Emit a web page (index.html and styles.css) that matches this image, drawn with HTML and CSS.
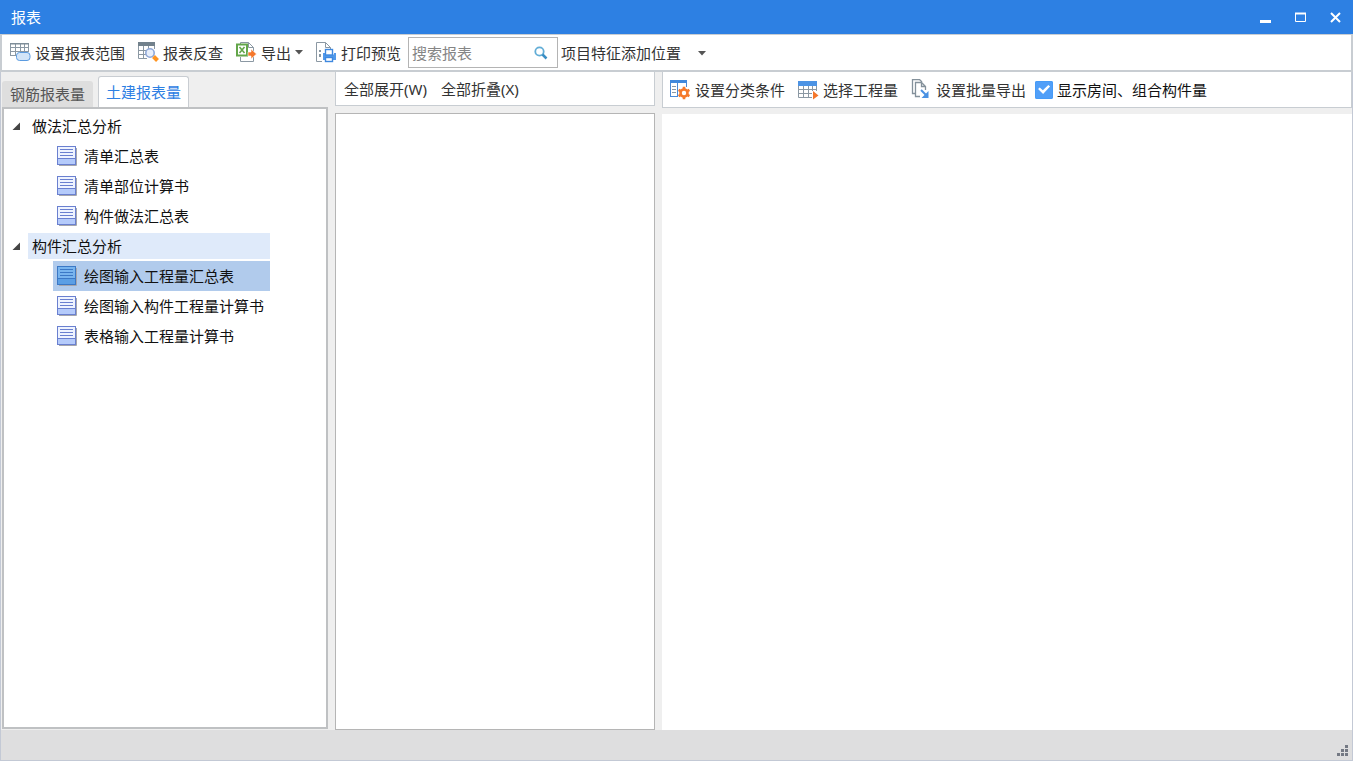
FILE: index.html
```html
<!DOCTYPE html>
<html lang="zh-CN">
<head>
<meta charset="utf-8">
<title>报表</title>
<link rel="stylesheet" href="styles.css">
</head>
<body>
<svg class="defs" aria-hidden="true">
  <symbol id="report" viewBox="0 0 21 21">
    <path d="M2 19.500h17.500V2" fill="none" stroke="#a4a6ad"/>
    <rect x=".5" y=".5" width="18" height="18" fill="var(--paper)" stroke="var(--edge)"/>
    <path d="M1 13h17v5H1z" fill="var(--foot)"/>
    <path d="M1 12.500h17M3 3.500h13M3 6.500h13M3 9.500h13" stroke="var(--edge)" fill="none"/>
  </symbol>
  <symbol id="caret" viewBox="0 0 8 5"><path d="M0 0h8L4 4.500z" fill="#555"/></symbol>
  <symbol id="twisty" viewBox="0 0 9 9"><path d="M8 .5V8H.5z" fill="#444"/></symbol>
</svg>
<div class="window">
  <header class="titlebar">
    <h1 class="title">报表</h1>
    <div class="controls">
      <button class="control" aria-label="最小化"><svg width="11" height="11"><path d="M0 9.500h11" stroke="#fff" stroke-width="3"/></svg></button>
      <button class="control" aria-label="最大化"><svg width="11" height="11"><path d="M.5 1v8.500h10V1" fill="none" stroke="#fff"/><path d="M0 1.500h11" stroke="#fff" stroke-width="2"/></svg></button>
      <button class="control" aria-label="关闭"><svg width="11" height="11"><path d="M1 1l9 9M10 1l-9 9" stroke="#fff" stroke-width="2"/></svg></button>
    </div>
  </header>

  <div class="toolbar main-toolbar">
    <div class="group">
      <button class="tool">
        <svg class="icon" viewBox="0 0 21 21"><path d="M.5 1.500h18M.5 5.500h18M.5 9.500h18M.5 13.500H7M.5 1v13M5.500 1v13M10.500 1v9M14.500 1v9M18.500 1v9" fill="none" stroke="#8b98a3"/><path d="M0 1h19v1.500H0z" fill="#7f8e99"/><rect x="6.500" y="10.500" width="13.500" height="8" rx="3" fill="#d3e5f8" stroke="#5b9be0"/></svg>
        设置报表范围</button>
      <button class="tool">
        <svg class="icon" viewBox="0 0 21 21"><path d="M.5 1v15.500H9M5.500 4v12M10.500 4v4M16.500 1v6M1 8.500h8M1 12.500h7" fill="none" stroke="#8b98a3"/><path d="M0 0h17v4H0z" fill="#72818c"/><circle cx="12" cy="11" r="4.200" fill="#e8effb" stroke="#8fa8d8" stroke-width="1.600"/><path d="M15.500 14.500l4 4" stroke="#ff9420" stroke-width="4"/></svg>
        报表反查</button>
      <button class="tool">
        <svg class="icon" viewBox="0 0 21 21"><path d="M4.500 2V.500h8l5 5v14h-13V15M12.500.5v5h5" fill="#fff" stroke="#8b98a3"/><rect x="1" y="2.500" width="10" height="11" fill="#fff" stroke="#63a64a" stroke-width="2"/><path d="M3.500 5l5 6M8.500 5l-5 6" stroke="#63a64a" stroke-width="1.600"/><path d="M12 10h3V7l5.500 5-5.500 5v-3h-3z" fill="#f5772b" stroke="#fff" stroke-width=".6"/></svg>
        导出
        <svg class="caret export-caret"><use href="#caret"/></svg></button>
      <button class="tool">
        <svg class="icon" viewBox="0 0 21 21"><path d="M6 19.500H.500V.500h9l5 5V7M9.500.5v5h5" fill="#fff" stroke="#8b98a3"/><path d="M3 8h2v2H3zM3 12h2v3H3z" fill="#8795a0"/><path d="M7 11h2v3h9v-3h2v7H7z" fill="#5299ea"/><path d="M7 12.500h13v4H7z" fill="#5299ea"/><rect x="9.500" y="7.500" width="7" height="5.500" fill="#fff" stroke="#3e88df" stroke-width="1.400"/><rect x="9.500" y="15.500" width="7" height="4" fill="#fff" stroke="#3e88df" stroke-width="1.400"/></svg>
        打印预览</button>
    </div>
    <div class="search">
      <input class="search-input" type="text" placeholder="搜索报表" aria-label="搜索报表">
      <svg class="search-icon" viewBox="0 0 14 14"><circle cx="5.500" cy="5.500" r="4.200" fill="none" stroke="#62add6" stroke-width="1.800"/><path d="M8.500 8.500l4 4" stroke="#3c8fc4" stroke-width="2.500"/></svg>
    </div>
    <div class="position">
      <select class="position-select" aria-label="项目特征添加位置"><option>项目特征添加位置</option></select>
      <svg class="caret position-caret"><use href="#caret"/></svg>
    </div>
  </div>

  <main class="content">
    <section class="reports">
      <div class="tabs" role="tablist">
        <button class="tab" role="tab" aria-selected="false">钢筋报表量</button>
        <button class="tab active" role="tab" aria-selected="true">土建报表量</button>
      </div>
      <div class="tree-panel">
        <ul class="tree">
          <li>
            <div class="branch"><svg class="twisty"><use href="#twisty"/></svg><button class="branch-label">做法汇总分析</button></div>
            <ul class="leaves">
              <li><button class="leaf"><svg class="icon"><use href="#report"/></svg>清单汇总表</button></li>
              <li><button class="leaf"><svg class="icon"><use href="#report"/></svg>清单部位计算书</button></li>
              <li><button class="leaf"><svg class="icon"><use href="#report"/></svg>构件做法汇总表</button></li>
            </ul>
          </li>
          <li>
            <div class="branch"><svg class="twisty"><use href="#twisty"/></svg><button class="branch-label current">构件汇总分析</button></div>
            <ul class="leaves">
              <li><button class="leaf selected"><svg class="icon"><use href="#report"/></svg>绘图输入工程量汇总表</button></li>
              <li><button class="leaf"><svg class="icon"><use href="#report"/></svg>绘图输入构件工程量计算书</button></li>
              <li><button class="leaf"><svg class="icon"><use href="#report"/></svg>表格输入工程量计算书</button></li>
            </ul>
          </li>
        </ul>
      </div>
    </section>

    <section class="outline">
      <div class="toolbar outline-toolbar">
        <button class="tool">全部展开(W)</button>
        <button class="tool">全部折叠(X)</button>
      </div>
      <div class="outline-panel"></div>
    </section>

    <section class="preview">
      <div class="toolbar preview-toolbar">
        <button class="tool">
          <svg class="icon" viewBox="0 0 21 21"><rect x=".5" y="1.500" width="16" height="16" fill="#fff" stroke="#4a8ad8"/><path d="M0 1h17v3H0z" fill="#4189dc"/><path d="M7.500 4v14" stroke="#4a8ad8"/><path d="M2 7.500h4M2 10.500h4M2 13.500h4" stroke="#8b98a3"/><path d="M7.500 8h12v12h-12z" fill="#fff"/><path d="M7.500 4v14" stroke="#4a8ad8"/><path d="M16.500 4v4" stroke="#4a8ad8"/><circle cx="14" cy="14" r="3.500" fill="#fff" stroke="#f57a2c" stroke-width="2.600"/><path d="M14 7.800v3M14 17.200v3M8.600 10.900l2.600 1.500M16.800 15.600l2.600 1.500M8.600 17.100l2.600-1.500M16.800 12.400l2.600-1.500" stroke="#f57a2c" stroke-width="2.600"/></svg>
          设置分类条件</button>
        <button class="tool">
          <svg class="icon" viewBox="0 0 21 21"><path d="M.5 6v12.500H14M5.500 6v12M10.500 6v12M14.500 6v6M18.500 6v6M1 10.500h18M1 14.500h13" fill="none" stroke="#8b98a3"/><path d="M0 2h19v5H0z" fill="#4c93e4"/><path d="M15 12l5.500 4.500L15 20.500z" fill="#f5772b"/></svg>
          选择工程量</button>
        <button class="tool">
          <svg class="icon" viewBox="0 0 21 21"><path d="M5 14.500H1.500V.500h7l2.500 2.500" fill="none" stroke="#84919b" stroke-width="1.300"/><path d="M9 17.500H4.500v-14h6l4 4V11M10.500 3.500v4h4" fill="#fff" stroke="#84919b" stroke-width="1.300"/><path d="M10 11l5 5" stroke="#4a91e2" stroke-width="2"/><path d="M17.500 12v7h-7z" fill="#4a91e2"/></svg>
          设置批量导出</button>
        <label class="check"><input class="check-box" type="checkbox" checked>显示房间、组合构件量</label>
      </div>
      <div class="preview-panel"></div>
    </section>
  </main>

  <footer class="statusbar">
    <svg class="grip" viewBox="0 0 12 12"><path d="M8 0h3v3H8zM8 4h3v3H8zM4 4h3v3H4zM8 8h3v3H8zM4 8h3v3H4zM0 8h3v3H0z" fill="#747984"/></svg>
  </footer>
</div>
</body>
</html>
```
FILE: styles.css
```css
* {
  box-sizing: border-box;
}

body {
  margin: 0;
  color: #333;
  font: 15px/20px "Noto Sans", "Noto Sans CJK SC", sans-serif;
}

button,
input,
select {
  margin: 0;
  padding: 0;
  border: 0;
  background: none;
  color: inherit;
  font: inherit;
}

svg {
  display: block;
  flex: none;
}

ul {
  margin: 0;
  padding: 0;
  list-style: none;
}

.defs {
  position: absolute;
  width: 0;
  height: 0;
}

.window {
  display: flex;
  flex-direction: column;
  height: 100vh;
  background: #efefef;
}

.titlebar {
  display: flex;
  align-items: center;
  justify-content: space-between;
  height: 34px;
  padding: 0 12px 0 11px;
  background: #2d80e3;
  color: #fff;
}

.title {
  margin: 0;
  font-size: 15px;
  font-weight: normal;
  line-height: 20px;
}

.controls {
  display: flex;
  gap: 24px;
}

.control {
  padding: 6px 0;
}

.toolbar {
  display: flex;
  align-items: center;
  background: #fff;
}

.main-toolbar {
  height: 38px;
  gap: 3px;
  padding-left: 4px;
  border: solid #c8cdd2;
  border-width: 1px 2px 2px;
}

.group {
  display: flex;
  gap: 5px;
}

.tool {
  display: flex;
  align-items: center;
  gap: 4px;
  padding: 4px;
  white-space: nowrap;
}

.icon {
  width: 21px;
  height: 21px;
}

.caret {
  width: 8px;
  height: 5px;
}

.search {
  display: flex;
  align-items: center;
  width: 150px;
  height: 31px;
  padding: 0 9px 0 3px;
  border: 1px solid #b4b4b4;
}

.search-input {
  flex: 1;
  min-width: 0;
  outline: none;
}

.search-input::placeholder {
  color: #858585;
  opacity: 1;
}

.search-icon {
  width: 14px;
  height: 14px;
}

.position {
  position: relative;
}

.position-select {
  padding-right: 24px;
  appearance: none;
}

.position-caret {
  position: absolute;
  top: 8px;
  right: 0;
  pointer-events: none;
}

.content {
  display: flex;
  flex: 1;
  gap: 7px;
  min-height: 0;
  border: solid #c3c9d5;
  border-width: 0 1px;
}

.reports,
.outline,
.preview {
  display: flex;
  flex-direction: column;
}

.reports {
  width: 327px;
  padding-left: 1px;
}

.outline {
  gap: 7px;
  width: 320px;
}

.preview {
  flex: 1;
  gap: 6px;
  min-width: 0;
}

.tabs {
  display: flex;
  align-items: flex-end;
  gap: 5px;
  height: 35px;
}

.tab {
  height: 26px;
  padding: 0 8px;
  border-radius: 3px 3px 0 0;
  background: #dedede;
  color: #555;
}

.tab.active {
  height: 31px;
  padding: 0 7px;
  border: 1px solid #c9cdd2;
  border-bottom: 0;
  background: #fff;
  color: #2d80e3;
}

.tree-panel {
  flex: 1;
  margin-bottom: 1px;
  padding-top: 2px;
  border: 2px solid #bfc1c3;
  background: #fff;
}

.tree {
  width: fit-content;
  padding-left: 8px;
  color: #111;
}

.branch {
  display: flex;
  align-items: center;
  gap: 7px;
  padding: 2px 0;
}

.twisty {
  width: 9px;
  height: 9px;
}

.branch-label {
  flex: 1;
  height: 26px;
  padding-left: 4px;
  text-align: left;
}

.branch-label.current {
  background: #dfeafa;
}

.leaves {
  padding-left: 41px;
}

.leaf {
  --paper: #eef3ff;
  --edge: #6a80d0;
  --foot: #b5cbfb;
  display: flex;
  align-items: center;
  gap: 6px;
  width: 100%;
  height: 30px;
  padding: 0 6px 0 4px;
  white-space: nowrap;
}

.leaf.selected {
  --paper: #78b4ee;
  --edge: #3b78c6;
  --foot: #5b9fe5;
  background: #b1cbec;
}

.outline-toolbar {
  height: 34px;
  gap: 6px;
  padding-left: 4px;
  border: 1px solid #c8cdd2;
  border-top: 0;
}

.outline-panel {
  flex: 1;
  border: 1px solid #b5b5b5;
  background: #fff;
}

.preview-toolbar {
  height: 36px;
  gap: 5px;
  padding-left: 3px;
  border: 1px solid #c8cdd2;
  border-top: 0;
}

.check {
  display: flex;
  align-items: center;
  gap: 4px;
  color: #111;
  white-space: nowrap;
}

.check-box {
  display: grid;
  place-items: center;
  width: 18px;
  height: 18px;
  border-radius: 2px;
  background: #fff;
  box-shadow: inset 0 0 0 1px #469bf7;
  appearance: none;
}

.check-box:checked {
  background: #519ff8;
}

.check-box:checked::before {
  width: 12px;
  height: 9px;
  background: #fff;
  clip-path: polygon(0 45%, 14% 28%, 40% 58%, 86% 0, 100% 18%, 42% 100%);
  content: "";
}

.preview-panel {
  flex: 1;
  background: #fff;
}

.statusbar {
  display: flex;
  align-items: flex-end;
  justify-content: flex-end;
  height: 31px;
  padding: 0 3px 3px;
  border: 1px solid #c3c9d5;
  border-top: 0;
  background: #dededf;
}

.grip {
  width: 12px;
  height: 12px;
}
```
